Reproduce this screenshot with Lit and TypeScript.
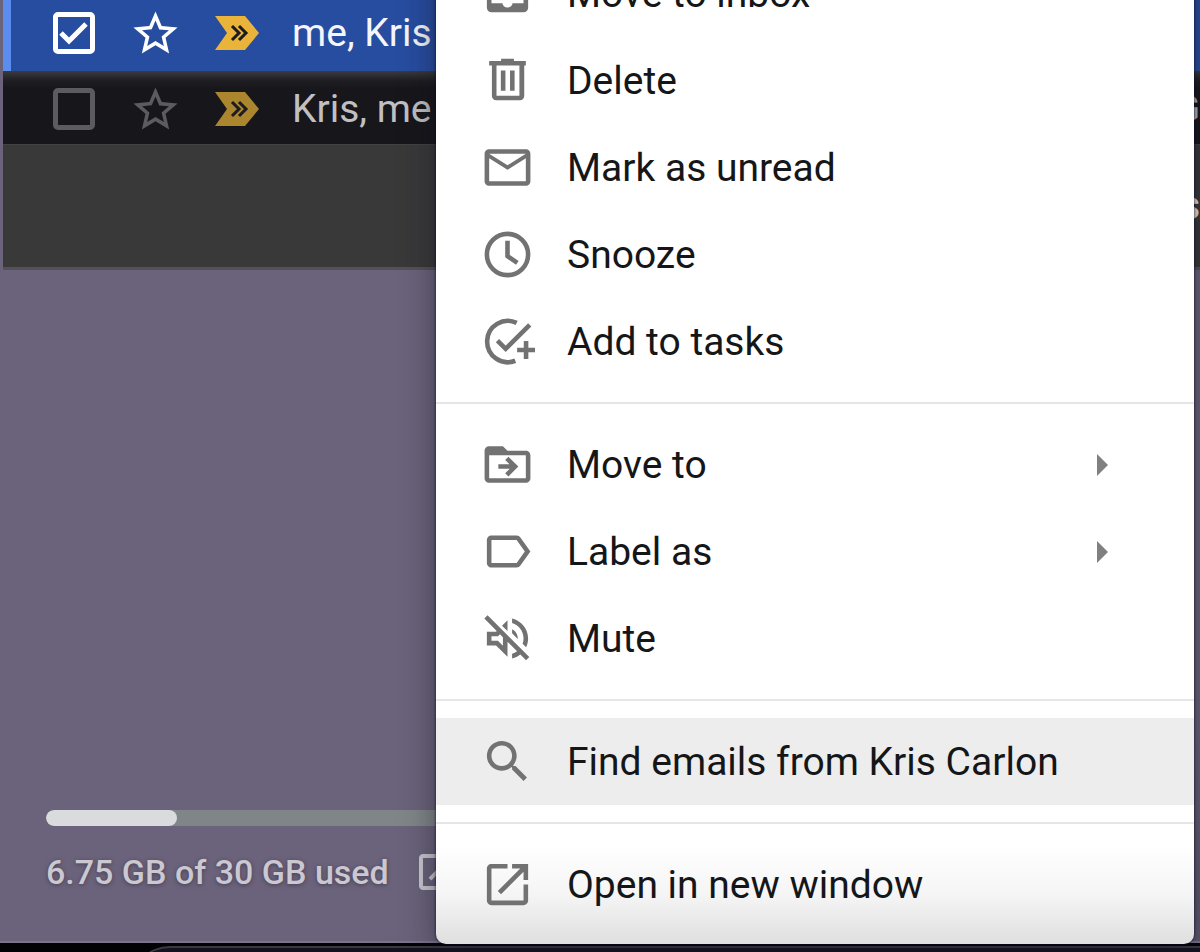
import { LitElement, html, css, svg, nothing, type SVGTemplateResult } from "lit";
import { customElement, property } from "lit/decorators.js";

const glyphs: Record<string, SVGTemplateResult> = {
  inbox: svg`<path fill-rule="evenodd" d="M5 2h14a2 2 0 0 1 2 2v14.2a2 2 0 0 1-2 2H5a2 2 0 0 1-2-2V4a2 2 0 0 1 2-2zM5 4v12.3h4.8a2.2 1.8 0 0 0 4.4 0H19V4z"/>`,
  trash: svg`<path fill-rule="evenodd" d="M9.2 2.5h5.6v1H20v1.9h-.7v13.4a1.8 1.8 0 0 1-1.8 1.8H7a1.8 1.8 0 0 1-1.8-1.8V5.4H4V3.500h5.2zM7.2 5.4v13.200h10V5.400zM9.100 7.600H11.100v8.900H9.100zM13.100 7.600h2v8.900h-2z"/>`,
  mail: svg`<path d="M20 4H4c-1.1 0-2 .9-2 2v12c0 1.1.9 2 2 2h16c1.1 0 2-.9 2-2V6c0-1.1-.9-2-2-2zm0 14H4V8l8 5 8-5v10zm-8-7L4 6h16l-8 5z"/>`,
  clock: svg`<g fill="none" stroke="currentColor" stroke-width="2"><circle cx="12" cy="12" r="9"/><path d="M12 6v6.700l4.300 3"/></g>`,
  task: svg`<g fill="none" stroke="currentColor" stroke-width="2"><path d="M16 3.900A9 9 0 1 0 15.400 20.400"/><path d="M7.600 11.600l3.600 3.600L21.700 4.700M20.100 11.800v7.800M16.200 15.700H24"/></g>`,
  folder: svg`<path fill-rule="evenodd" d="M20 6h-8l-2-2H4c-1.1 0-2 .9-2 2v12c0 1.1.9 2 2 2h16c1.1 0 2-.9 2-2V8c0-1.1-.9-2-2-2zM4 8h16v10H4z"/><path fill="none" stroke="currentColor" stroke-width="2" d="M8 12.900h7M11.700 9.300l3.600 3.600-3.600 3.600"/>`,
  label: svg`<path d="M17.63 5.84C17.27 5.33 16.67 5 16 5L5 5.01C3.9 5.01 3 5.9 3 7v10c0 1.1.9 1.99 2 1.99L16 19c.67 0 1.27-.33 1.63-.84L22 12l-4.37-6.16zM16 17H5V7h11l3.55 5L16 17z"/>`,
  mute: svg`<path d="M3.300 1.900L1.900 3.300 7.29 8.7 7 9H3v6h4l5 5v-6.59l4.18 4.18c-.65.49-1.38.88-2.18 1.11v2.06c1.34-.3 2.57-.92 3.6-1.75l2.500 2.500 1.410-1.410zM10 15.17L7.83 13H5v-2h2.83l.88-.88L10 11.41v3.76zM19 12c0 .82-.15 1.61-.41 2.34l1.53 1.53c.56-1.17.88-2.48.88-3.87 0-4.28-2.99-7.86-7-8.77v2.06c2.89.86 5 3.54 5 6.71zm-7-8l-2.400 2.400L12 8.700V4zm4.5 8c0-1.77-1.02-3.29-2.5-4.03v1.79l2.48 2.48c.01-.08.02-.16.02-.24z"/>`,
  search: svg`<path d="M15.5 14h-.79l-.28-.27C15.41 12.59 16 11.11 16 9.5 16 5.91 13.09 3 9.5 3S3 5.91 3 9.5 5.91 16 9.5 16c1.61 0 3.09-.59 4.23-1.57l.27.28v.79l5 4.99L20.49 19l-4.99-5zm-6 0C7.01 14 5 11.99 5 9.5S7.01 5 9.5 5 14 7.01 14 9.5 11.99 14 9.5 14z"/>`,
  open: svg`<path d="M19 19H5V5h7V3H5c-1.11 0-2 .9-2 2v14c0 1.1.89 2 2 2h14c1.1 0 2-.9 2-2v-7h-2v7zM14 3v2h3.59l-9.83 9.83 1.41 1.41L19 6.41V10h2V3h-7z"/>`,
  star: svg`<path d="M22 9.24l-7.19-.62L12 2 9.19 8.63 2 9.24l5.46 4.73L5.82 21 12 17.27 18.18 21l-1.63-7.03L22 9.24zM12 15.4l-3.76 2.27 1-4.28-3.32-2.88 4.38-.38L12 6.1l1.71 4.04 4.38.38-3.32 2.88 1 4.28L12 15.4z"/>`,
};

const icon = (name: string) =>
  html`<svg class="icon" viewBox="0 0 24 24" aria-hidden="true">${glyphs[name]}</svg>`;

const iconStyles = css`
  .icon {
    display: block;
    flex: none;
    width: 55px;
    height: 55px;
    fill: currentColor;
    overflow: visible;
  }
`;

@customElement("mail-row")
class MailRow extends LitElement {
  @property() names = "";
  @property() subject = "";
  @property({ type: Boolean, reflect: true }) selected = false;

  static styles = [
    iconStyles,
    css`
      :host {
        box-sizing: border-box;
        display: flex;
        align-items: center;
        height: 73px;
        padding: 3px 0 0 50px;
        background: linear-gradient(#3a3b3d, #1d1d22 10px, #16161b 18px);
        color: #c0c0c3;
        --mark: #5c5c60;
        --flag: #ab862e;
      }
      :host([selected]) {
        height: 76px;
        padding-top: 0;
        padding-left: 42px;
        border-left: 8px solid #5b8dee;
        background: #274da0;
        color: #f4f6fb;
        --mark: #ffffff;
        --flag: #eab33a;
      }
      .tick {
        position: relative;
        flex: none;
        width: 42px;
        height: 42px;
      }
      .box {
        appearance: none;
        display: block;
        box-sizing: border-box;
        width: 42px;
        height: 42px;
        margin: 0;
        border: 5px solid var(--mark);
        border-radius: 5px;
      }
      .check {
        position: absolute;
        inset: 0;
        pointer-events: none;
      }
      .star {
        margin-left: 34px;
        padding: 0;
        border: 0;
        background: none;
        color: var(--mark);
      }
      .star .icon {
        width: 53px;
        height: 53px;
      }
      .flag {
        flex: none;
        margin: 0 33px;
        fill: var(--flag);
      }
      .names {
        flex: 1;
        font-size: 39px;
        line-height: 48px;
        white-space: nowrap;
      }
      .subject {
        font-size: 36px;
      }
    `,
  ];

  render() {
    return html`
      <span class="tick">
        <input class="box" type="checkbox" aria-label=${`Select ${this.names}`} .checked=${this.selected} />
        ${this.selected
          ? html`<svg class="check" width="42" height="42" viewBox="0 0 42 42" aria-hidden="true">
              <path d="M8 21l8 8L33 12" fill="none" stroke="#fff" stroke-width="5" />
            </svg>`
          : nothing}
      </span>
      <button class="star" aria-label="Star">${icon("star")}</button>
      <svg class="flag" width="44" height="34" viewBox="0 0 44 34" aria-hidden="true">
        <path d="M0 0h30L44 17 30 34H0l12-17z" />
        <path
          d="M17 10l7 7-7 7M24 10l7 7-7 7"
          fill="none"
          stroke="#1c1b20"
          stroke-width="3"
        />
      </svg>
      <span class="names">${this.names}</span>
      <span class="subject">${this.subject}</span>
    `;
  }
}

@customElement("storage-meter")
class StorageMeter extends LitElement {
  @property({ type: Number }) used = 0;
  @property({ type: Number }) total = 1;

  static styles = [
    iconStyles,
    css`
      :host {
        display: block;
        width: 582px;
      }
      .track {
        height: 16px;
        border-radius: 8px;
        background: #808688;
        overflow: hidden;
      }
      .fill {
        height: 100%;
        border-radius: 8px;
        background: #d9dbdd;
      }
      .line {
        display: flex;
        align-items: center;
        gap: 24px;
        margin-top: 21px;
        color: #cbc8d1;
        font-size: 34px;
        line-height: 50px;
        font-weight: 500;
        text-shadow: 0 1px 4px rgba(40, 36, 56, 0.6);
      }
      .link {
        color: inherit;
      }
      .link .icon {
        width: 48px;
        height: 48px;
      }
    `,
  ];

  render() {
    return html`
      <div class="track">
        <div class="fill" style="width:${(this.used / this.total) * 100}%"></div>
      </div>
      <div class="line">
        <span>${this.used} GB of ${this.total} GB used</span>
        <a class="link" href="#storage" aria-label="Manage storage">${icon("open")}</a>
      </div>
    `;
  }
}

interface Entry {
  icon: string;
  text: string;
  submenu?: boolean;
  active?: boolean;
}

const groups: Entry[][] = [
  [
    { icon: "inbox", text: "Move to inbox" },
    { icon: "trash", text: "Delete" },
    { icon: "mail", text: "Mark as unread" },
    { icon: "clock", text: "Snooze" },
    { icon: "task", text: "Add to tasks" },
  ],
  [
    { icon: "folder", text: "Move to", submenu: true },
    { icon: "label", text: "Label as", submenu: true },
    { icon: "mute", text: "Mute" },
  ],
  [{ icon: "search", text: "Find emails from Kris Carlon", active: true }],
  [{ icon: "open", text: "Open in new window" }],
];

@customElement("context-menu")
class ContextMenu extends LitElement {
  static styles = [
    iconStyles,
    css`
      :host {
        display: block;
        padding: 17px 0 16px;
        border-radius: 0 0 10px 10px;
        background: linear-gradient(to top, #dfdfdf, #f5f5f5 50px, #ffffff 100px);
        box-shadow: 0 0 3px rgba(10, 8, 40, 0.9), 0 6px 34px rgba(20, 18, 30, 0.5);
      }
      .group + .group {
        margin-top: 17px;
        padding-top: 17px;
        border-top: 2px solid #e6e6e6;
      }
      .item {
        display: flex;
        align-items: center;
        gap: 32px;
        width: 100%;
        height: 87px;
        padding: 0 86px 0 44px;
        border: 0;
        background: none;
        color: #151618;
        font: inherit;
        font-size: 39px;
        line-height: 48px;
        text-align: left;
        white-space: nowrap;
      }
      .item.active {
        background: #ededed;
      }
      .item .icon {
        color: #727272;
      }
      .text {
        flex: 1;
      }
      .caret {
        fill: #808080;
      }
    `,
  ];

  render() {
    return groups.map(
      (group) => html`<div class="group" role="group">
        ${group.map(
          (e) => html`<button class="item ${e.active ? "active" : ""}" role="menuitem">
            ${icon(e.icon)}<span class="text">${e.text}</span>
            ${e.submenu
              ? html`<svg class="caret" width="11" height="22" viewBox="0 0 11 22" aria-hidden="true">
                  <path d="M0 0l11 11L0 22z" />
                </svg>`
              : nothing}
          </button>`
        )}
      </div>`
    );
  }
}

@customElement("app-root")
class AppRoot extends LitElement {
  static styles = css`
    :host {
      position: relative;
      display: flex;
      flex-direction: column;
      height: 100vh;
      overflow: hidden;
      background: #6b637b;
      font-family: Roboto, "Noto Sans", sans-serif;
    }
    .list {
      margin: -5px 0 0 3px;
      overflow: hidden;
    }
    .summary {
      height: 122px;
      border-top: 1px solid #424243;
      border-bottom: 3px solid #555257;
      background: #39393a;
      color: #ececec;
      font-size: 40px;
      font-weight: 500;
      line-height: 122px;
      text-align: right;
    }
    .foot {
      margin-top: auto;
      padding: 110px 46px 44px;
      background: linear-gradient(165deg, rgba(94, 88, 108, 0) 60%, #5e586c);
      border-bottom: 2px solid #7b7489;
    }
    .dock {
      flex: none;
      height: 9px;
      background: #020204;
      overflow: hidden;
    }
    .shelf {
      height: 40px;
      margin: 3px 0 0 130px;
      border-top: 2px solid #3a3940;
      border-radius: 40px 0 0 0;
      background: #14121f;
    }
    .menu {
      position: absolute;
      left: 436px;
      right: 6px;
      bottom: 8px;
    }
  `;

  render() {
    return html`
      <main class="list">
        <mail-row names="me, Kris" selected></mail-row>
        <mail-row names="Kris, me" subject="G"></mail-row>
        <div class="summary">s</div>
      </main>
      <footer class="foot">
        <storage-meter used="6.75" total="30"></storage-meter>
      </footer>
      <div class="dock"><div class="shelf"></div></div>
      <context-menu class="menu" role="menu"></context-menu>
    `;
  }
}
